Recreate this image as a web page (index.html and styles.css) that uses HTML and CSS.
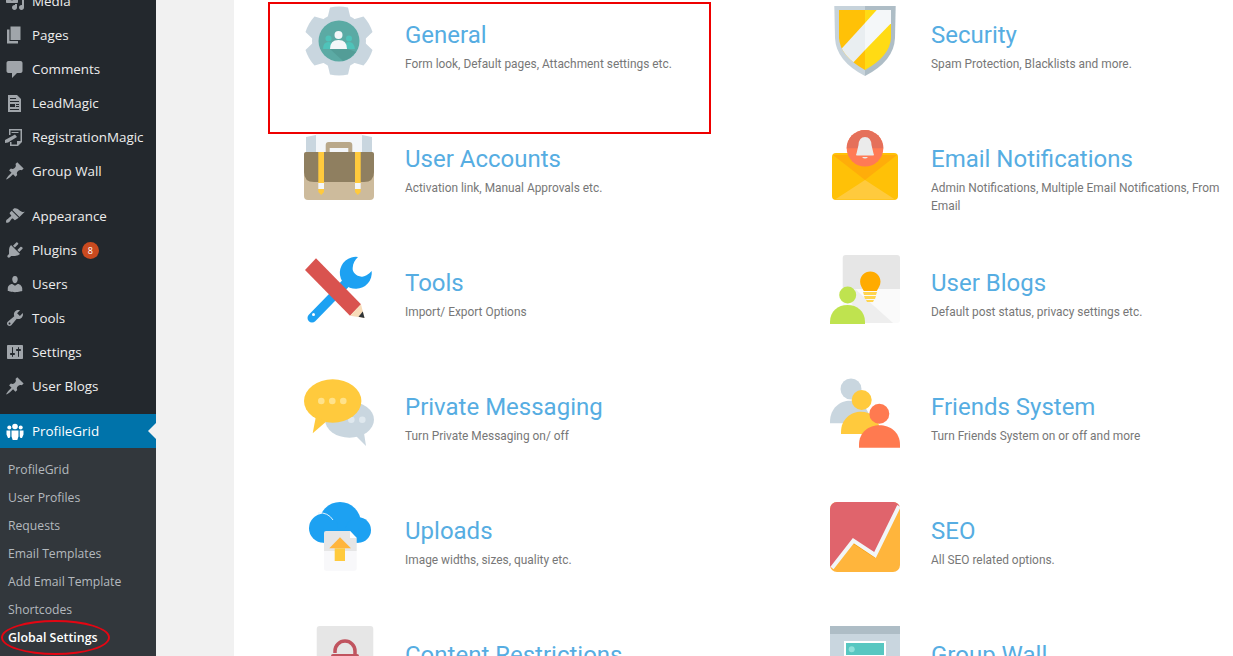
FILE: index.html
```html
<!DOCTYPE html>
<html lang="en">
<head>
<meta charset="utf-8">
<title>Global Settings</title>
<link rel="stylesheet" href="styles.css">
</head>
<body>
<div class="page">
  <aside class="sidebar">
    <svg class="defs" width="0" height="0" aria-hidden="true">
      <symbol id="pin" viewBox="0 0 20 20"><path d="M10.44 3.02l1.82-1.82 6.36 6.35-1.83 1.82c-1.05-.68-2.48-.57-3.41.36l-.75.75c-.92.93-1.04 2.35-.35 3.41l-1.83 1.82-2.41-2.41-2.8 2.79c-.42.42-3.38 2.71-3.8 2.29s1.86-3.39 2.28-3.81l2.79-2.79L4.1 9.36l1.83-1.82c1.05.69 2.48.57 3.4-.36l.75-.75c.93-.92 1.05-2.35.36-3.41z"/></symbol>
    </svg>
    <ul class="menu">
      <li class="item"><svg class="ico" viewBox="0 0 20 20"><path d="M13 11V4c0-.55-.45-1-1-1h-1.67L9 1H5L3.67 3H2c-.55 0-1 .45-1 1v7c0 .55.45 1 1 1h10c.55 0 1-.45 1-1zM7 4.5c1.38 0 2.5 1.12 2.5 2.5S8.38 9.5 7 9.5 4.5 8.38 4.5 7 5.62 4.5 7 4.5zM14 6h5v10.5c0 1.38-1.12 2.5-2.5 2.5S14 17.88 14 16.5s1.12-2.5 2.5-2.5c.17 0 .34.02.5.05V9h-3V6zm-4 8.05V13h2v3.5c0 1.38-1.12 2.5-2.5 2.5S7 17.88 7 16.5 8.12 14 9.5 14c.17 0 .34.02.5.05z"/></svg><span class="label">Media</span></li>
      <li class="item"><svg class="ico" viewBox="0 0 20 20"><path d="M5.500 15V1.500h10V15h-10zM4.500 16h8.500v2.500H2V4.500h2.500V16z"/></svg><span class="label">Pages</span></li>
      <li class="item"><svg class="ico" viewBox="0 0 20 20"><path d="M3.500 2h12c1.100 0 2 .9 2 2v8c0 1.100-.9 2-2 2h-3.500l-5 5v-5H3.500c-1.100 0-2-.9-2-2V4c0-1.100.9-2 2-2z"/></svg><span class="label">Comments</span></li>
      <li class="item"><svg class="ico" viewBox="0 0 20 20"><path fill-rule="evenodd" d="M3 2h9l4 4v13H3zM5 5v1h6V5zM5 8v1h9V8zM5 11v3h5v-3zM11 11v1h3v-1zM11 13v1h3v-1zM5 16v1h9v-1z"/></svg><span class="label">LeadMagic</span></li>
      <li class="item"><svg class="ico" viewBox="0 0 20 20"><path fill-rule="evenodd" d="M4 2h13v13l-4 4H5v-4h1.500v2.500h5.500v-3.500h3.500V3.500H5.500V8H4zM6.500 5h7v1h-7zM0 13l10-5.500 2 2.500-9 5.500-3 .5z"/></svg><span class="label">RegistrationMagic</span></li>
      <li class="item"><svg class="ico" viewBox="0 0 20 20"><use href="#pin"/></svg><span class="label">Group Wall</span></li>
      <li class="item sep"><svg class="ico" viewBox="0 0 20 20"><path d="M14.48 11.06L7.41 3.99l1.5-1.5c.5-.56 2.3-.47 3.51.32 1.21.8 1.43 1.28 2.91 2.1 1.18.64 2.45 1.26 4.45.85zm-.71.71L6.7 4.7 4.93 6.47c-.39.39-.39 1.02 0 1.41l1.06 1.06c.39.39.39 1.03 0 1.42-.6.6-1.43 1.11-2.21 1.69-.35.26-.7.53-1.01.84C1.43 13.23.65 14.89 1.2 16.74c1.03.39 2.7-.39 3.04-.72.31-.31.58-.66.84-1.01.58-.78 1.09-1.61 1.69-2.21.39-.39 1.02-.39 1.41 0l1.06 1.06c.39.39 1.02.39 1.41 0z"/></svg><span class="label">Appearance</span></li>
      <li class="item"><svg class="ico" viewBox="0 0 20 20"><path d="M13.11 4.36L9.870 7.600 8 5.730l3.240-3.240c.35-.34 1.050-.2 1.560.32.52.51.66 1.210.31 1.550zm-8 1.770l.91-1.120 9.010 9.010-1.190.84c-.71.71-2.630 1.160-3.820 1.160H6.140L4.900 17.260c-.59.59-1.540.59-2.120 0-.59-.58-.59-1.530 0-2.120l1.240-1.240v-3.880c0-1.130.4-3.190 1.090-3.890zm7.260 3.970l3.240-3.240c.34-.35 1.040-.21 1.550.31.52.51.66 1.210.31 1.550l-3.240 3.250z"/></svg><span class="label">Plugins</span><span class="badge">8</span></li>
      <li class="item"><svg class="ico" viewBox="0 0 20 20"><path d="M10 9.250c-2.270 0-2.730-3.440-2.730-3.440C7 4.020 7.820 2 9.970 2c2.160 0 2.980 2.020 2.710 3.810 0 0-.41 3.440-2.680 3.440zm0 2.570L12.720 10c2.390 0 4.520 2.330 4.520 4.530v2.490s-3.650 1.130-7.240 1.130c-3.650 0-7.240-1.130-7.240-1.130v-2.490c0-2.250 1.940-4.480 4.470-4.480z"/></svg><span class="label">Users</span></li>
      <li class="item"><svg class="ico" viewBox="0 0 20 20"><path d="M16.680 9.770c-1.340 1.340-3.300 1.670-4.950.99l-5.410 6.520c-.99.99-2.590.99-3.580 0s-.99-2.590 0-3.570l6.520-5.420c-.68-1.650-.35-3.610.99-4.950 1.280-1.280 3.120-1.620 4.720-1.060l-2.890 2.890 2.820 2.820 2.860-2.870c.53 1.580.18 3.390-1.080 4.650zM3.810 16.210c.4.39 1.040.39 1.430 0 .4-.4.4-1.040 0-1.430-.39-.4-1.030-.4-1.430 0-.39.39-.39 1.030 0 1.430z"/></svg><span class="label">Tools</span></li>
      <li class="item"><svg class="ico" viewBox="0 0 20 20"><path d="M18 16V4c0-.55-.45-1-1-1H3c-.55 0-1 .45-1 1v12c0 .55.45 1 1 1h14c.55 0 1-.45 1-1zM8 11h1c.55 0 1 .45 1 1s-.45 1-1 1H8v1.500c0 .28-.22.5-.5.5s-.5-.22-.5-.5V13H6c-.55 0-1-.45-1-1s.45-1 1-1h1V5.500c0-.28.22-.5.5-.5s.5.22.5.5V11zm5-2h-1c-.55 0-1-.45-1-1s.45-1 1-1h1V5.500c0-.28.22-.5.5-.5s.5.22.5.5V7h1c.55 0 1 .45 1 1s-.45 1-1 1h-1v5.500c0 .28-.22.5-.5.5s-.5-.22-.5-.5V9z"/></svg><span class="label">Settings</span></li>
      <li class="item"><svg class="ico" viewBox="0 0 20 20"><use href="#pin"/></svg><span class="label">User Blogs</span></li>
      <li class="item sep current"><svg class="ico" viewBox="0 0 20 20"><circle cx="10" cy="5.500" r="2.800"/><circle cx="4.300" cy="6.500" r="2"/><circle cx="15.700" cy="6.500" r="2"/><path d="M6.500 9.500h7v6l-1.200 3.500H7.700L6.500 15.500zM1.500 9.500h3.800v6l-.8 1.500h-1.500l-1.500-3.500zM14.700 9.500h3.800v4l-1.500 3.500h-1.500l-.8-1.500z"/></svg><span class="label">ProfileGrid</span></li>
      <li>
        <ul class="submenu">
          <li class="subitem">ProfileGrid</li>
          <li class="subitem">User Profiles</li>
          <li class="subitem">Requests</li>
          <li class="subitem">Email Templates</li>
          <li class="subitem">Add Email Template</li>
          <li class="subitem">Shortcodes</li>
          <li class="subitem active">Global Settings</li>
        </ul>
      </li>
    </ul>
  </aside>

  <main class="content">
    <section class="card">
      <svg class="art" viewBox="0 0 70 70">
        <g fill="#c9d6df">
          <circle cx="35" cy="35" r="27"/>
          <path d="M26 1.500Q35-.5 44 1.500L47 14H23Z"/>
          <path d="M26 1.500Q35-.5 44 1.500L47 14H23Z" transform="rotate(60 35 35)"/>
          <path d="M26 1.500Q35-.5 44 1.500L47 14H23Z" transform="rotate(120 35 35)"/>
          <path d="M26 1.500Q35-.5 44 1.500L47 14H23Z" transform="rotate(180 35 35)"/>
          <path d="M26 1.500Q35-.5 44 1.500L47 14H23Z" transform="rotate(240 35 35)"/>
          <path d="M26 1.500Q35-.5 44 1.500L47 14H23Z" transform="rotate(300 35 35)"/>
        </g>
        <circle cx="35" cy="35" r="20.500" fill="#5baaa4"/>
        <path d="M26 43h18l8 3-6 6-7 3z" fill="#539d97"/>
        <g fill="#4fc3b9">
          <circle cx="24.500" cy="32.500" r="3"/><circle cx="45" cy="32.500" r="3"/>
          <path d="M19 43q0-7 5.500-7t5.500 7zM40 43q0-7 5-7t6 7z"/>
        </g>
        <circle cx="34.500" cy="29" r="4" fill="#f4f7f9"/>
        <path d="M26 43q0-9 8.500-9T43 43z" fill="#f4f7f9"/>
      </svg>
      <div class="text"><h2 class="title">General</h2><p class="desc">Form look, Default pages, Attachment settings etc.</p></div>
    </section>

    <section class="card">
      <svg class="art" viewBox="0 0 70 70">
        <defs><clipPath id="shieldclip"><path d="M9 4H61V32Q60 50 35 64 10 50 9 32Z"/></clipPath></defs>
        <path d="M4.300 0H35V70Q6 55 5 32Z" fill="#c7d3db"/>
        <path d="M65.700 0H35V70Q64 55 65 32Z" fill="#aebdc6"/>
        <g clip-path="url(#shieldclip)">
          <rect x="0" y="0" width="35" height="70" fill="#ffc107"/>
          <rect x="35" y="0" width="35" height="70" fill="#ffdb14"/>
          <path d="M5 50L35 17V44L20 60Z" fill="#e9eef1"/>
          <path d="M35 17L46.700 4H65V13L35 44Z" fill="#f4f7f9"/>
        </g>
      </svg>
      <div class="text"><h2 class="title">Security</h2><p class="desc">Spam Protection, Blacklists and more.</p></div>
    </section>

    <section class="card">
      <svg class="art" viewBox="0 0 70 70">
        <path d="M2 7l10-2v18H2zM68 7l-10-2v18h10z" fill="#c9d6df"/>
        <rect x="12" y="3" width="46" height="20" fill="#f3f6f9"/>
        <path d="M21.700 23V15q0-3 3-3h20.600q3 0 3 3v8h-4v-5h-18.600v5z" fill="#b9a88a"/>
        <rect x="0" y="22" width="70" height="48" rx="4" fill="#cdbb9c"/>
        <path d="M0 24q0-2 2-2h66q2 0 2 2v18q0 10-10 10H10Q0 52 0 42z" fill="#8f7f60"/>
        <path d="M14.300 22H20V53H14.300zM51 22H56.700V53H51z" fill="#ffca3d"/>
        <path d="M14.300 53H20V59H14.300zM51 53H56.700V59H51z" fill="#f4f7f9"/>
        <path d="M14.300 59H20V62L17.200 65 14.300 62zM51 59H56.700V62L53.800 65 51 62z" fill="#ffca3d"/>
      </svg>
      <div class="text"><h2 class="title">User Accounts</h2><p class="desc">Activation link, Manual Approvals etc.</p></div>
    </section>

    <section class="card">
      <svg class="art" viewBox="0 0 70 70">
        <rect x="2" y="23" width="66" height="47" rx="4" fill="#ffc107"/>
        <path d="M3 25L35 50 67 25Z" fill="#ffad0a"/>
        <path d="M5 69.500L35 50 65 69.500Z" fill="#ffca3d"/>
        <circle cx="35" cy="18.300" r="18.300" fill="#ff7a55"/>
        <path d="M16.700 18.300a18.300 18.300 0 0 1 36.600 0z" fill="#e5705a"/>
        <path d="M35 7q6 0 6.500 8l2 8.500q1 1.500 0 2H26.500q-1-.5 0-2l2-8.500Q29 7 35 7zM32 27h6q-3 3-6 0z" fill="#ebebeb"/>
      </svg>
      <div class="text"><h2 class="title">Email Notifications</h2><p class="desc">Admin Notifications, Multiple Email Notifications, From Email</p></div>
    </section>

    <section class="card">
      <svg class="art" viewBox="0 0 70 70">
        <path d="M8 64L45 26" stroke="#1da1f2" stroke-width="9" stroke-linecap="round"/>
        <path d="M54 3A16 16 0 1 0 67.700 17C64 21 60 23 57.700 22.700 52 22 48 18 48.700 13.700 49 9 51 6 54 3Z" fill="#1da1f2"/>
        <circle cx="9.500" cy="60.500" r="1.500" fill="#fff"/>
        <path d="M1 16L12 4.300 57 50.300 46 61.700Z" fill="#d9534f"/>
        <path d="M46 61.700L57 50.300 60.500 64Z" fill="#f7dcb9"/>
        <path d="M54.500 62.700L58.800 57.500 60.500 64Z" fill="#2f3437"/>
      </svg>
      <div class="text"><h2 class="title">Tools</h2><p class="desc">Import/ Export Options</p></div>
    </section>

    <section class="card">
      <svg class="art" viewBox="0 0 70 70">
        <path d="M12.700 3a3 3 0 0 1 3-3H67a3 3 0 0 1 3 3V34H12.700z" fill="#e6e6e6" transform="translate(0 1)"/>
        <path d="M12.700 35H70V66a3 3 0 0 1-3 3H12.700z" fill="#fafafa"/>
        <path d="M25 35L63 69H30L20 45Z" fill="#eeeeee"/>
        <path d="M33 38h14l-1 3H34zM34 42h12l-1 3H35zM36 46h8l-1 2h-6z" fill="#ffd54f"/>
        <path d="M40.300 17.500c5.800 0 10.200 4.500 10.200 10.200 0 4-2.400 6.300-3.700 9.300H33.800c-1.300-3-3.700-5.300-3.700-9.300 0-5.700 4.400-10.200 10.200-10.200z" fill="#ffab00"/>
        <circle cx="17.700" cy="41" r="8.500" fill="#bfe34f"/>
        <path d="M0 70V68C0 57 8 51 17.500 51S35 57 35 68V70Z" fill="#bfe34f"/>
      </svg>
      <div class="text"><h2 class="title">User Blogs</h2><p class="desc">Default post status, privacy settings etc.</p></div>
    </section>

    <section class="card">
      <svg class="art" viewBox="0 0 70 70">
        <ellipse cx="45.500" cy="41.700" rx="24.500" ry="18" fill="#c9d6df"/>
        <circle cx="47.300" cy="41.700" r="3.300" fill="#dfe8ee"/>
        <circle cx="58.300" cy="41.700" r="3.300" fill="#dfe8ee"/>
        <path d="M51 57L60 55 62 68Z" fill="#c9d6df"/>
        <ellipse cx="28.700" cy="23" rx="28.700" ry="21.700" fill="#ffca3d"/>
        <path d="M12 38L22 43.700 8.700 55.300Z" fill="#ffca3d"/>
        <circle cx="17.300" cy="23" r="3.300" fill="#ffe28a"/>
        <circle cx="28.300" cy="23" r="3.300" fill="#ffe28a"/>
        <circle cx="39.300" cy="23" r="3.300" fill="#ffe28a"/>
      </svg>
      <div class="text"><h2 class="title">Private Messaging</h2><p class="desc">Turn Private Messaging on/ off</p></div>
    </section>

    <section class="card">
      <svg class="art" viewBox="0 0 70 70">
        <circle cx="21" cy="11" r="10.500" fill="#c9d6df"/>
        <path d="M0 45.300V44C0 30 10 22.700 20 22.700S40 30 40 44v1.300Z" fill="#c9d6df"/>
        <circle cx="31.700" cy="22" r="10" fill="#ffca3d"/>
        <path d="M11 56V54C11 41 21 33.700 31 33.700S50 41 50 54v2Z" fill="#ffca3d"/>
        <circle cx="49.300" cy="35.700" r="10" fill="#ff7a50"/>
        <path d="M29 69.700V67C29 54 39 47.300 49.500 47.300S70 54 70 67v2.700Z" fill="#ff7a50"/>
      </svg>
      <div class="text"><h2 class="title">Friends System</h2><p class="desc">Turn Friends System on or off and more</p></div>
    </section>

    <section class="card">
      <svg class="art" viewBox="0 0 70 70">
        <g fill="#1da1f2">
          <circle cx="36" cy="21" r="21"/>
          <circle cx="19.500" cy="26.300" r="14.500"/>
          <circle cx="54.300" cy="28" r="12.700"/>
          <rect x="19.500" y="26" width="35" height="14.700"/>
        </g>
        <path d="M14 11Q24 10 29 18" stroke="#e3f3fe" stroke-width="1" fill="none"/>
        <path d="M22 29H46L52.700 36V49H20V31a2 2 0 0 1 2-2z" fill="#e6e6e6"/>
        <path d="M20 49H52.700V66.700a2 2 0 0 1-2 2H22a2 2 0 0 1-2-2z" fill="#f8f8fa"/>
        <path d="M46 29L52.700 36H46Z" fill="#fff"/>
        <path d="M36 35.300L47 46.300H25.300Z" fill="#ffb53c"/>
        <rect x="30.700" y="46.300" width="10.300" height="12.700" fill="#ffca3d"/>
      </svg>
      <div class="text"><h2 class="title">Uploads</h2><p class="desc">Image widths, sizes, quality etc.</p></div>
    </section>

    <section class="card">
      <svg class="art" viewBox="0 0 70 70">
        <rect x="0" y="0" width="70" height="70" rx="7" fill="#ffb53c"/>
        <path d="M0 7a7 7 0 0 1 7-7H62a8 8 0 0 1 8 5L45 53 23.300 38.700 1.700 66.300 0 64Z" fill="#e0646c"/>
        <path d="M23.300 41.700L45 56 46.500 53 45 51 23.300 37Z" fill="#f59a00"/>
        <path d="M2 66L23.300 38.700 45 53 69 4" stroke="#f2f6f8" stroke-width="4" fill="none"/>
      </svg>
      <div class="text"><h2 class="title">SEO</h2><p class="desc">All SEO related options.</p></div>
    </section>

    <section class="card">
      <svg class="art" viewBox="0 0 70 70">
        <rect x="12.700" y="0" width="56.600" height="70" rx="3" fill="#e6e6e6"/>
        <path d="M31 27V25a10 10 0 0 1 20 0v3" stroke="#c0545f" stroke-width="3.500" fill="none"/>
        <rect x="27" y="28" width="28" height="22" rx="2" fill="#c0545f"/>
      </svg>
      <div class="text"><h2 class="title">Content Restrictions</h2><p class="desc">Content restriction options.</p></div>
    </section>

    <section class="card">
      <svg class="art" viewBox="0 0 70 70">
        <rect width="70" height="70" fill="#c9d6df"/>
        <rect width="70" height="8" fill="#aebdc6"/>
        <rect x="15" y="16" width="40" height="14" fill="#57c7c1" stroke="#fff" stroke-width="2"/>
        <circle cx="21.700" cy="23.300" r="3" fill="#8fe0da"/>
      </svg>
      <div class="text"><h2 class="title">Group Wall</h2><p class="desc">Group wall options.</p></div>
    </section>
  </main>

  <div class="mark-box"></div>
  <div class="mark-oval"></div>
</div>
</body>
</html>
```
FILE: styles.css
```css
* {
  box-sizing: border-box;
}

html,
body {
  margin: 0;
  padding: 0;
  height: 656px;
  overflow: hidden;
  background: #f1f1f1;
}

.page {
  position: relative;
  display: flex;
  width: 1233px;
  height: 656px;
  overflow: hidden;
}

.sidebar {
  flex: 0 0 156px;
  background: #23282d;
  font-family: "Open Sans", sans-serif;
}

.defs {
  position: absolute;
}

.menu,
.submenu {
  list-style: none;
  margin: 0;
  padding: 0;
}

.menu {
  margin-top: -16px;
}

.item {
  position: relative;
  display: flex;
  align-items: center;
  height: 34px;
  padding-left: 5px;
  font-size: 13.4px;
  color: #eeeeee;
}

.item.sep {
  margin-top: 11px;
}

.item.current {
  background: #0073aa;
  color: #ffffff;
}

.item.current .ico {
  fill: #ffffff;
}

.item.current::after {
  content: "";
  position: absolute;
  right: 0;
  top: 9px;
  border: 8px solid transparent;
  border-right-color: #f1f1f1;
  border-left-width: 0;
}

.ico {
  flex: 0 0 20px;
  width: 20px;
  height: 20px;
  margin-right: 7px;
  fill: #a0a5aa;
}

.badge {
  display: inline-block;
  width: 17px;
  height: 17px;
  margin-left: 5px;
  border-radius: 50%;
  background: #ca4a1f;
  color: #ffffff;
  font-size: 9px;
  line-height: 17px;
  text-align: center;
}

.submenu {
  padding: 8px 0 6px;
  background: #32373c;
}

.subitem {
  height: 28px;
  padding-left: 8px;
  font-size: 12.2px;
  line-height: 28px;
  color: #b4b9be;
}

.subitem.active {
  color: #ffffff;
  font-size: 12.4px;
  font-weight: 600;
}

.content {
  flex: 1 1 auto;
  display: grid;
  grid-template-columns: 526px 1fr;
  grid-auto-rows: 124px;
  margin-left: 78px;
  padding: 6px 0 0 70px;
  background: #ffffff;
  font-family: Roboto, sans-serif;
}

.card {
  display: flex;
  align-items: flex-start;
}

.art {
  flex: 0 0 70px;
  width: 70px;
  height: 70px;
  margin-right: 31px;
}

.text {
  flex: 1 1 auto;
  min-width: 0;
  padding-top: 14px;
}

.title {
  margin: 0 0 5px;
  font-size: 24px;
  font-weight: 400;
  line-height: 30px;
  color: #56ade2;
}

.desc {
  margin: 0;
  font-size: 11.9px;
  line-height: 18px;
  color: #777777;
}

.mark-box {
  position: absolute;
  left: 268px;
  top: 2px;
  width: 443px;
  height: 132px;
  border: 2px solid #ee0000;
}

.mark-oval {
  position: absolute;
  left: 1px;
  top: 620px;
  width: 109px;
  height: 35px;
  border: 2px solid #e30613;
  border-radius: 50%;
}
```
